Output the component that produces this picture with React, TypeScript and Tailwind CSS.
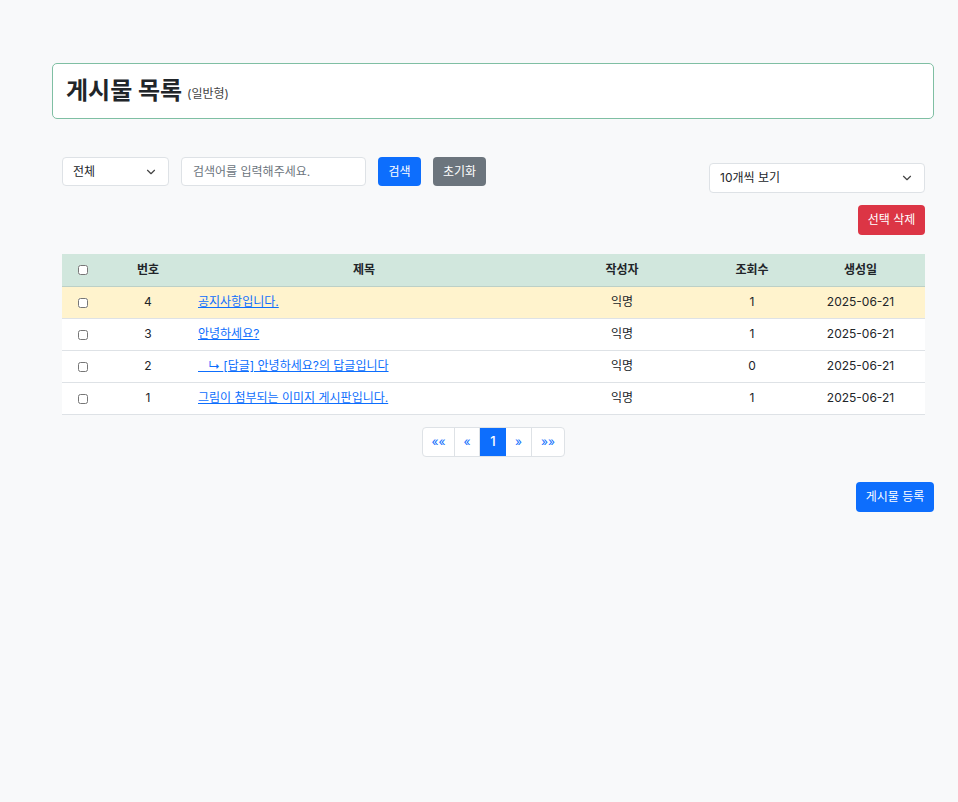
import { ChevronDown } from 'lucide-react';

interface Post {
  id: number;
  title: string;
  writer: string;
  views: number;
  created: string;
  notice?: boolean;
  reply?: boolean;
}

const posts: Post[] = [
  { id: 4, title: '공지사항입니다.', writer: '익명', views: 1, created: '2025-06-21', notice: true },
  { id: 3, title: '안녕하세요?', writer: '익명', views: 1, created: '2025-06-21' },
  { id: 2, title: '[답글] 안녕하세요?의 답글입니다', writer: '익명', views: 0, created: '2025-06-21', reply: true },
  { id: 1, title: '그림이 첨부되는 이미지 게시판입니다.', writer: '익명', views: 1, created: '2025-06-21' },
];

const font = "font-['Inter','Noto_Sans_CJK_KR',sans-serif]";

export default function App() {
  return (
    <div className={`min-h-[802px] w-full bg-[#f8f9fa] text-[#212529] ${font}`}>
      <div className="pl-[52px] pr-[24px] pt-[63px]">
        {/* Title */}
        <div className="flex h-[56px] items-center rounded-[5px] border border-[#7fbfa3] bg-white px-[13px]">
          <h1 className="text-[24px] font-bold leading-none">게시물 목록</h1>
          <span className="ml-[5px] mt-[6px] text-[12px] text-[#444]">(일반형)</span>
        </div>

        <div className="pl-[10px] pr-[9px]">
          {/* Search row */}
          <div className="mt-[38px] flex items-start justify-between">
            <div className="flex items-center">
              <div className="flex h-[29px] w-[107px] items-center justify-between rounded-[4px] border border-[#dee2e6] bg-white pl-[10px] pr-[10px] text-[12px]">
                <span>전체</span>
                <ChevronDown className="h-[14px] w-[14px] text-[#444]" strokeWidth={2} />
              </div>
              <div className="ml-[12px] flex h-[29px] w-[185px] items-center rounded-[4px] border border-[#dee2e6] bg-white px-[11px] text-[12px] text-[#6c757d]">
                검색어를 입력해주세요.
              </div>
              <button className="ml-[12px] h-[29px] w-[43px] rounded-[4px] bg-[#0d6efd] text-[12px] text-white">검색</button>
              <button className="ml-[12px] h-[29px] w-[53px] rounded-[4px] bg-[#6c757d] text-[12px] text-white">초기화</button>
            </div>
            <div className="flex flex-col items-end">
              <div className="mt-[6px] flex h-[30px] w-[216px] items-center justify-between rounded-[4px] border border-[#dee2e6] bg-white pl-[10px] pr-[10px] text-[12px]">
                <span>10개씩 보기</span>
                <ChevronDown className="h-[14px] w-[14px] text-[#444]" strokeWidth={2} />
              </div>
              <button className="mt-[12px] h-[30px] w-[67px] rounded-[4px] bg-[#dc3545] text-[12px] text-white">선택 삭제</button>
            </div>
          </div>

          {/* Table */}
          <table className="mt-[19px] w-full table-fixed border-collapse text-[12px]">
            <colgroup>
              <col className="w-[42px]" />
              <col className="w-[88px]" />
              <col className="w-[344px]" />
              <col className="w-[172px]" />
              <col className="w-[88px]" />
              <col />
            </colgroup>
            <thead>
              <tr className="h-[32px] border-b border-[#bcd0c7] bg-[#d1e7dd] font-bold">
                <th className="text-center">
                  <input type="checkbox" className="h-[10px] w-[10px] align-middle" />
                </th>
                <th className="text-center">번호</th>
                <th className="text-center">제목</th>
                <th className="text-center">작성자</th>
                <th className="text-center">조회수</th>
                <th className="text-center">생성일</th>
              </tr>
            </thead>
            <tbody>
              {posts.map(p => (
                <tr
                  key={p.id}
                  className={`h-[32px] border-b border-[#dee2e6] ${p.notice ? 'bg-[#fff3cd]' : 'bg-white'}`}
                >
                  <td className="text-center">
                    <input type="checkbox" className="h-[10px] w-[10px] align-middle" />
                  </td>
                  <td className="text-center">{p.id}</td>
                  <td className="pl-[6px]">
                    <a href="#" className="text-[#0d6efd] underline">
                      {p.reply ? <span className="whitespace-pre">{'   ↳ '}</span> : null}
                      {p.title}
                    </a>
                  </td>
                  <td className="text-center">{p.writer}</td>
                  <td className="text-center">{p.views}</td>
                  <td className="text-center">{p.created}</td>
                </tr>
              ))}
            </tbody>
          </table>

          {/* Pagination */}
          <div className="mt-[12px] flex justify-center">
            <div className="flex h-[30px] overflow-hidden rounded-[4px] border border-[#dee2e6] bg-white text-[12px] text-[#0d6efd]">
              <span className="flex w-[32px] items-center justify-center border-r border-[#dee2e6]">««</span>
              <span className="flex w-[25px] items-center justify-center border-r border-[#dee2e6]">«</span>
              <span className="flex w-[26px] items-center justify-center bg-[#0d6efd] text-[13px] font-medium text-white">1</span>
              <span className="flex w-[26px] items-center justify-center border-r border-[#dee2e6]">»</span>
              <span className="flex w-[32px] items-center justify-center">»»</span>
            </div>
          </div>
        </div>

        {/* Register */}
        <div className="mt-[25px] flex justify-end">
          <button className="h-[30px] w-[78px] rounded-[4px] bg-[#0d6efd] text-[12px] text-white">게시물 등록</button>
        </div>
      </div>
    </div>
  );
}
